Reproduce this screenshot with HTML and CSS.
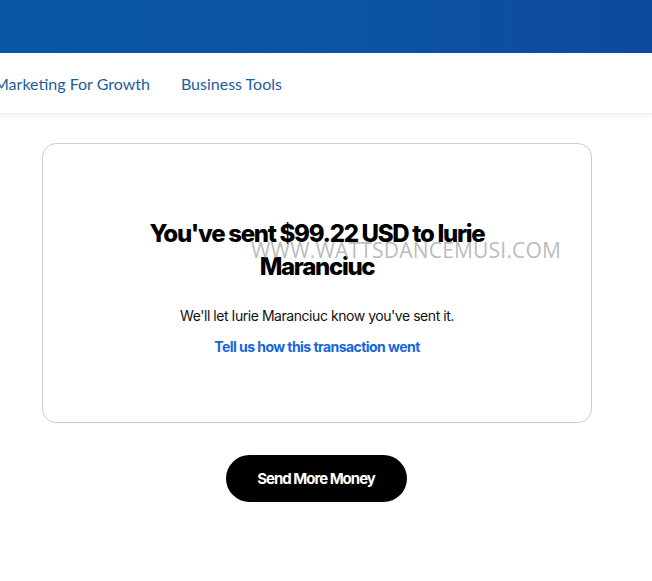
FILE: index.html
```html
<!DOCTYPE html>
<html lang="en">
<head>
<meta charset="utf-8">
<title>Sent</title>
<link rel="stylesheet" href="styles.css">
</head>
<body>
<header class="top"></header>
<nav class="nav">
  <a class="nav-link" href="#">Marketing For Growth</a>
  <a class="nav-link" href="#">Business Tools</a>
</nav>
<main class="main">
  <section class="card">
    <div class="head-wrap">
      <h1 class="title">You've sent $99.22 USD to Iurie Maranciuc</h1>
      <span class="watermark">WWW.WATTSDANCEMUSI.COM</span>
    </div>
    <p class="msg">We'll let Iurie Maranciuc know you've sent it.</p>
    <a class="feedback" href="#">Tell us how this transaction went</a>
  </section>
  <button class="btn">Send More Money</button>
</main>
</body>
</html>
```
FILE: styles.css
```css
html, body { margin: 0; padding: 0; background: #fff; }
body { font-family: Inter, "Liberation Sans", sans-serif; overflow: hidden; }
.top {
  height: 53px;
  background: linear-gradient(90deg, #0a55a6 0%, #0b52a4 60%, #0e4a9f 100%);
}
.nav {
  height: 60px;
  display: flex;
  align-items: center;
  gap: 31px;
  margin-left: -6px;
  box-shadow: 0 2px 4px rgba(0,0,0,0.06);
  border-bottom: 1px solid #f2f2f2;
}
.nav-link {
  font-family: Lato, "Open Sans", sans-serif;
  font-size: 16px;
  color: #1b5e9e;
  text-decoration: none;
  padding-top: 1px;
}
.main {
  display: flex;
  flex-direction: column;
  align-items: center;
  padding-top: 29px;
}
.card {
  width: 550px;
  height: 280px;
  border: 1px solid #cdcdcd;
  border-radius: 14px;
  margin-left: -18px;
  display: flex;
  flex-direction: column;
  align-items: center;
  box-sizing: border-box;
  padding-top: 73px;
}
.head-wrap { position: relative; width: 360px; }
.title {
  margin: 0;
  font-size: 24px;
  font-weight: 800;
  line-height: 33px;
  letter-spacing: -1.3px;
  text-align: center;
  color: #000;
}
.watermark {
  position: absolute;
  left: 114px;
  top: 19px;
  font-family: "Open Sans", sans-serif;
  font-size: 21px;
  color: rgba(140,140,140,0.6);
  white-space: nowrap;
  letter-spacing: 0.2px;
}
.msg {
  margin: 24px 0 0;
  font-size: 14px;
  color: #111;
  letter-spacing: -0.45px;
}
.feedback {
  margin-top: 14px;
  font-size: 14px;
  font-weight: 700;
  color: #1466e0;
  text-decoration: none;
  letter-spacing: -0.55px;
}
.btn {
  margin-top: 32px;
  margin-left: -20px;
  width: 181px;
  height: 47px;
  border: 0;
  border-radius: 24px;
  background: #000;
  color: #fff;
  font-family: Inter, sans-serif;
  font-size: 15px;
  font-weight: 700;
  letter-spacing: -1px;
}
```
